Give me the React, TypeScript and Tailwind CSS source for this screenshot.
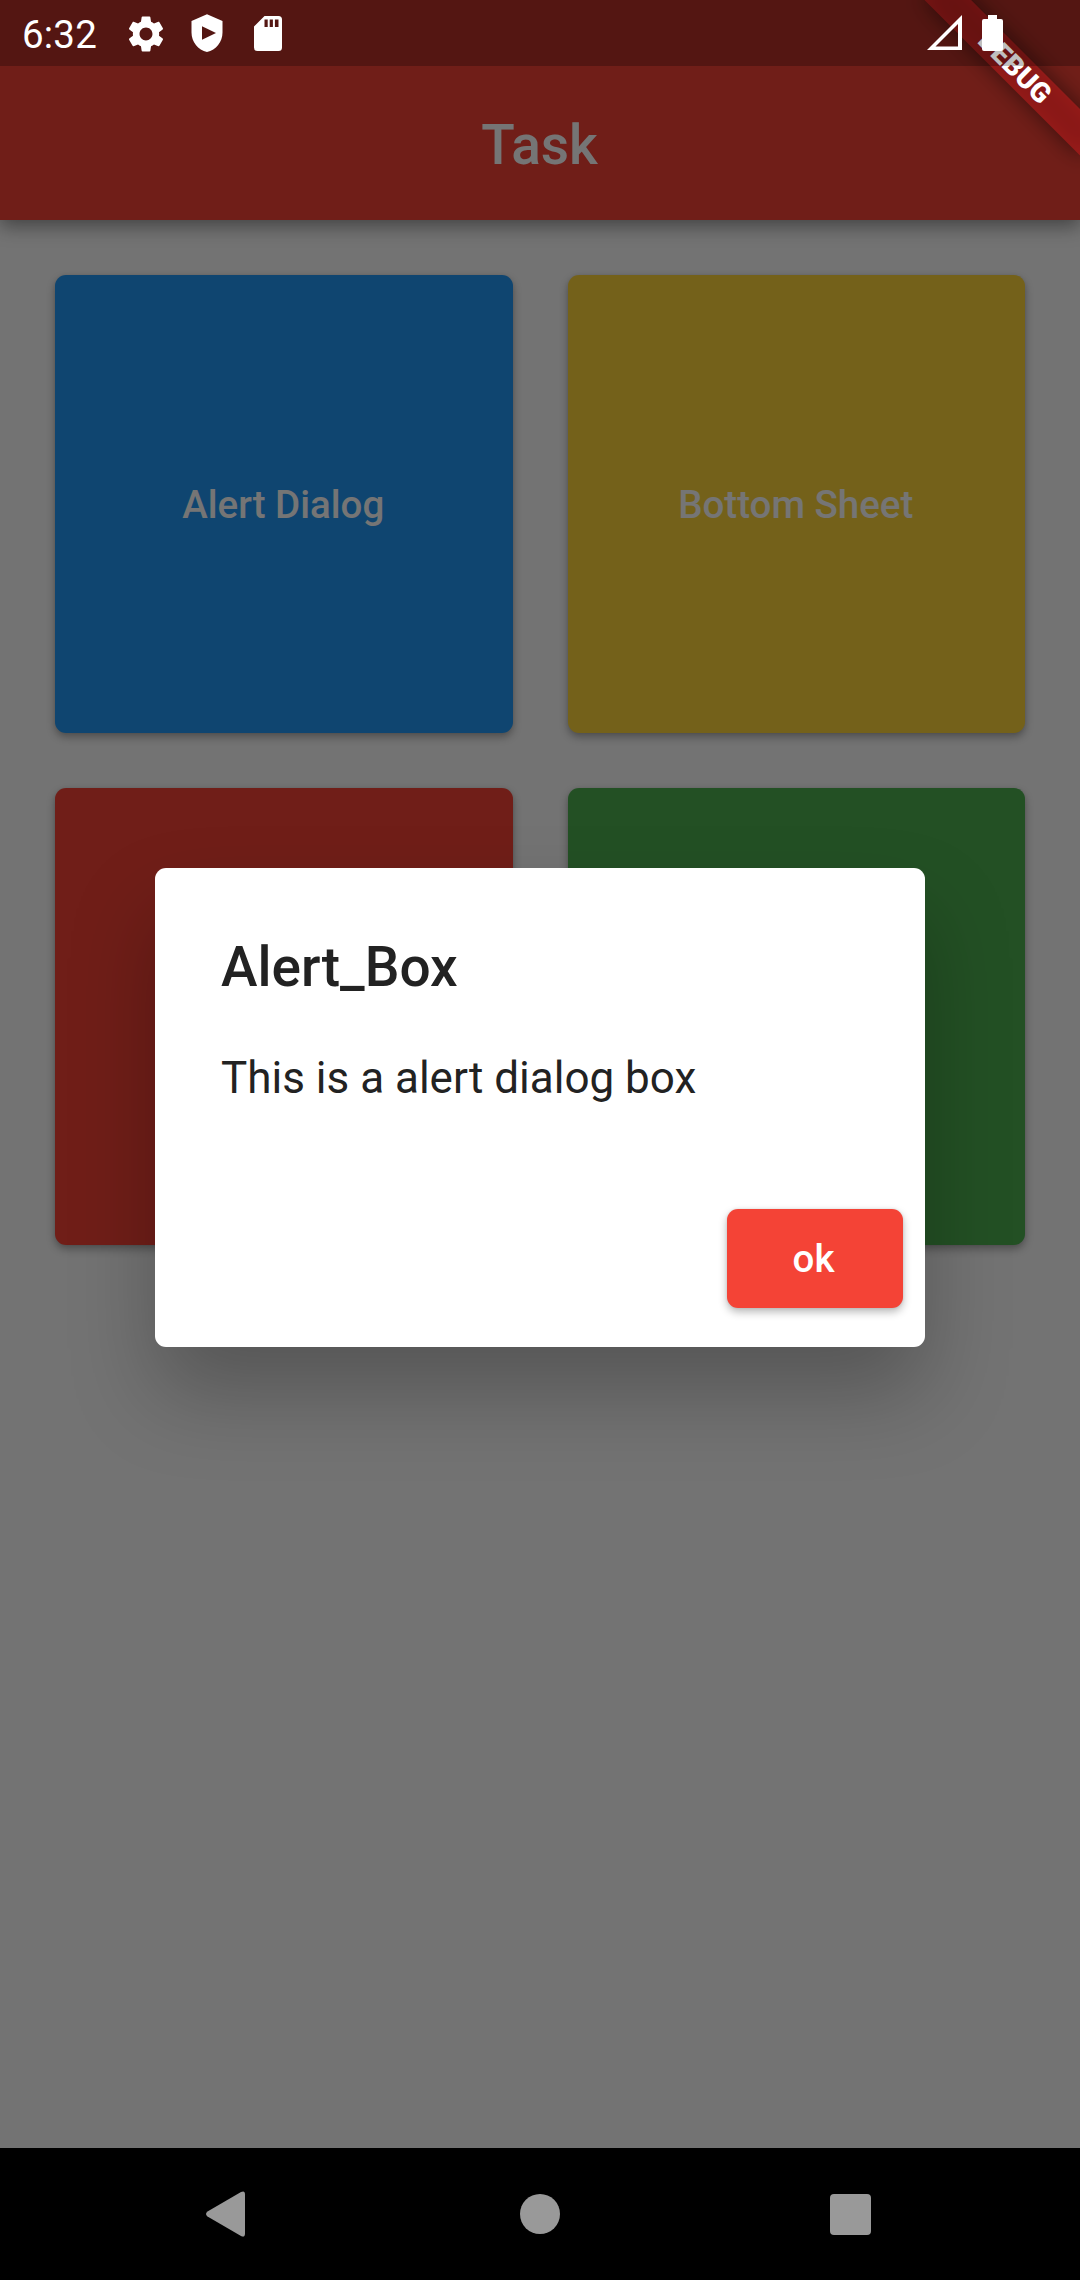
import React from "react";

const tiles = [
  { label: "Alert Dialog", color: "bg-[#2196f3]" },
  { label: "Bottom Sheet", color: "bg-[#fdd43a]" },
  { label: "", color: "bg-[#f44336]" },
  { label: "", color: "bg-[#4caf50]" },
];

function AppBar() {
  return (
    <header className="relative z-10 flex h-[220px] shrink-0 items-center justify-center bg-[#f44336] pt-[70px] shadow-[0_6px_18px_rgba(0,0,0,0.42)]">
      <h1 className="pr-px text-[55px] leading-none font-medium text-white">Task</h1>
    </header>
  );
}

function TileGrid() {
  return (
    <main className="grid flex-1 grid-cols-2 content-start gap-[55px] p-[55px]">
      {tiles.map((tile, i) => (
        <button
          key={i}
          className={`${tile.color} flex h-[457.5px] items-center justify-center rounded-[11px] pt-[2px] pr-px text-[38.5px] leading-none font-medium text-white shadow-[0_4px_8px_rgba(0,0,0,0.32),0_0_4px_rgba(0,0,0,0.06)]`}
        >
          {tile.label}
        </button>
      ))}
    </main>
  );
}

function AlertBox() {
  return (
    <section className="flex h-[479px] w-[770px] flex-col rounded-[11px] bg-white text-[#222222] shadow-[0_46px_86px_-2px_rgba(0,0,0,0.26)]">
      <h2 className="px-[66px] pt-[67px] text-[55px] leading-[64px] font-medium">Alert_Box</h2>
      <p className="px-[66px] pt-[53px] text-[44px] leading-[52px]">This is a alert dialog box</p>
      <div className="mt-auto flex justify-end px-[22px] pb-[39px]">
        <button className="flex h-[99px] w-[176px] items-center justify-center rounded-[11px] bg-[#f44336] pt-[2px] pr-[3px] text-[38.5px] leading-none font-medium text-white shadow-[0_4px_8px_rgba(0,0,0,0.28),0_0_3px_rgba(0,0,0,0.1)]">
          ok
        </button>
      </div>
    </section>
  );
}

function DebugBanner() {
  return (
    <div className="pointer-events-none absolute inset-0 overflow-hidden">
      <div className="absolute top-0 left-full size-0 rotate-45">
        <div className="absolute top-[77px] left-[-110px] h-[33px] w-[220px] bg-black/50 blur-[11px]" />
        <div className="absolute top-[77px] left-[-110px] flex h-[33px] w-[220px] items-center justify-center bg-[#b71c1c]/63 pl-[3px] text-[28px] leading-none font-black text-white">
          DEBUG
        </div>
      </div>
    </div>
  );
}

function StatusBar() {
  return (
    <div className="absolute inset-x-0 top-0 flex h-[66px] justify-between bg-black/25 text-white">
      <div className="flex items-start">
        <span className="w-[105px] pt-[14px] pl-[22px] text-[38.5px] leading-[42px] tracking-[0.2px]">6:32</span>
        <svg className="mt-[12.5px] ml-[20px] size-[42px]" viewBox="0 0 24 24" fill="currentColor">
          <path d="M19.43 12.98c.04-.32.07-.64.07-.98s-.03-.66-.07-.98l2.11-1.65c.19-.15.24-.42.12-.64l-2-3.46c-.12-.22-.39-.3-.61-.22l-2.49 1c-.52-.4-1.08-.73-1.69-.98l-.38-2.65C14.46 2.18 14.25 2 14 2h-4c-.25 0-.46.18-.49.42l-.38 2.65c-.61.25-1.17.59-1.69.98l-2.49-1c-.23-.09-.49 0-.61.22l-2 3.46c-.13.22-.07.49.12.64l2.11 1.65c-.04.32-.07.65-.07.98s.03.66.07.98l-2.11 1.65c-.19.15-.24.42-.12.64l2 3.46c.12.22.39.3.61.22l2.49-1c.52.4 1.08.73 1.69.98l.38 2.65c.03.24.24.42.49.42h4c.25 0 .46-.18.49-.42l.38-2.65c.61-.25 1.17-.59 1.69-.98l2.49 1c.23.09.49 0 .61-.22l2-3.46c.12-.22.07-.49-.12-.64l-2.11-1.65zM12 15.700c-2.04 0-3.700-1.660-3.700-3.700s1.660-3.700 3.700-3.700 3.700 1.660 3.700 3.700-1.660 3.700-3.700 3.700z" />
        </svg>
        <svg className="mt-[14px] ml-[24px] h-[38px] w-[32px]" viewBox="0 0 32 38" fill="currentColor" fillRule="evenodd">
          <path d="M16 .2 31.5 7v11.5C31.5 28 25 36 16 38 7 36 .5 28 .5 18.500V7zM11 12.200v13.600L25 19z" />
        </svg>
        <svg className="mt-[16px] ml-[31px] h-[35px] w-[28px]" viewBox="0 0 28 35" fill="currentColor" fillRule="evenodd">
          <path d="M10.500 0H24.500Q28 0 28 3.500V31.500Q28 35 24.500 35H3.500Q0 35 0 31.500V10.500zM10.500 3.500v7.500h3.200V3.500zM15.700 3.500v7.500h3.200V3.500zM20.900 3.500v7.500h3.600V3.500z" />
        </svg>
      </div>
      <div className="flex items-start pr-[77px]">
        <svg className="mt-[15px] h-[35px] w-[35px]" viewBox="0 0 35 35" fill="currentColor" fillRule="evenodd">
          <path d="M0 35 35 0V35zM8.500 31.500H31V9z" />
        </svg>
        <svg className="mt-[15px] ml-[20px] h-[36px] w-[21px]" viewBox="0 0 21 36" fill="currentColor">
          <path d="M6 0h9v4h4q2 0 2 2v28q0 2-2 2H2q-2 0-2-2V6q0-2 2-2h4z" />
        </svg>
      </div>
    </div>
  );
}

function NavigationBar() {
  return (
    <nav className="grid h-[132px] shrink-0 grid-cols-[1fr_40px_1fr] items-center bg-black pr-[209px] pl-[206px]">
      <svg className="h-[46px] w-[40px]" viewBox="0 0 40 46" fill="#999999">
        <path d="M1.500 20.500 35 1q4-2 4 2.500v39q0 4.500-4 2.500L1.500 25.500q-3-2.500 0-5z" />
      </svg>
      <span className="ml-[1.5px] size-[40px] rounded-full bg-[#999999]" />
      <span className="size-[41px] justify-self-end rounded-[4px] bg-[#999999]" />
    </nav>
  );
}

export default function App() {
  return (
    <div className="flex h-[2280px] w-[1080px] flex-col overflow-hidden bg-black font-[Roboto,sans-serif]">
      <div className="relative flex flex-1 flex-col overflow-hidden bg-[#fafafa]">
        <AppBar />
        <TileGrid />
        <div className="absolute inset-0 z-20 flex items-center justify-center bg-black/54 pt-[66px]">
          <AlertBox />
        </div>
        <div className="absolute inset-0 z-30">
          <DebugBanner />
          <StatusBar />
        </div>
      </div>
      <NavigationBar />
    </div>
  );
}
